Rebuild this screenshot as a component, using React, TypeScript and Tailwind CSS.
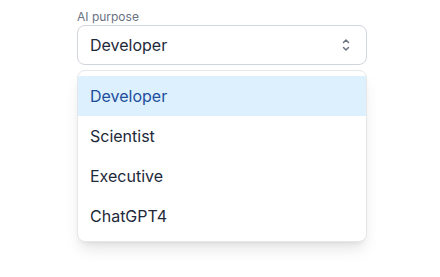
import React from 'react';

const OPTIONS = ['Developer', 'Scientist', 'Executive', 'ChatGPT4'];

export default function App() {
    const selected = 'Developer';

    return (
        <div className="min-h-screen bg-white font-['Inter',sans-serif]">
            <div className="ml-[77px] w-[290px] pt-[9px]">
                <label className="block text-xs leading-4 text-gray-500">AI purpose</label>
                <button className="flex h-10 w-full items-center justify-between rounded-lg border border-gray-300 bg-white pl-3 pr-4 text-base text-gray-800">
                    <span>{selected}</span>
                    <svg width="8" height="14" viewBox="0 0 8 14" fill="none" stroke="#6b7280" strokeWidth="1.5" strokeLinecap="round" strokeLinejoin="round">
                        <path d="M1.5 4.5 4 2l2.5 2.5" />
                        <path d="M1.5 9.5 4 12l2.5-2.5" />
                    </svg>
                </button>

                {/* Dropdown */}
                <ul className="mt-[5px] overflow-hidden rounded-lg border border-gray-200 bg-white py-[5px] shadow-lg">
                    {OPTIONS.map((opt) => {
                        const active = opt === selected;
                        return (
                            <li
                                key={opt}
                                className={
                                    active
                                        ? 'flex h-10 items-center bg-[#dcf0fe] px-3 text-base text-[#1e4d9c]'
                                        : 'flex h-10 items-center px-3 text-base text-gray-800'
                                }
                            >
                                {opt}
                            </li>
                        );
                    })}
                </ul>
            </div>
        </div>
    );
}
